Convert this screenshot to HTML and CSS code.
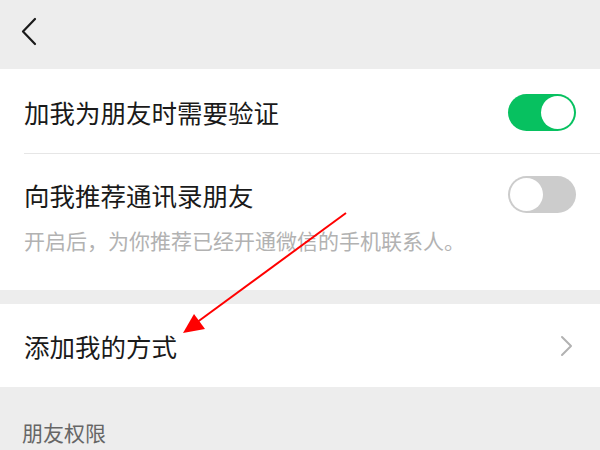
FILE: index.html
```html
<!DOCTYPE html>
<html lang="zh-CN">
<head>
<meta charset="utf-8">
<title>朋友权限设置</title>
<link rel="stylesheet" href="styles.css">
</head>
<body>
<div class="page">
  <header class="header">
    <svg class="back" width="20" height="30" viewBox="0 0 20 30">
      <polyline points="15,2 3,14.5 15,27" fill="none" stroke="#1a1a1a" stroke-width="2.2" stroke-linecap="round" stroke-linejoin="round"/>
    </svg>
  </header>

  <section class="group">
    <div class="row row-first">
      <span class="title">加我为朋友时需要验证</span>
      <span class="switch on"><span class="knob"></span></span>
    </div>
    <div class="row-wrap">
      <div class="row-second">
        <div class="line">
          <span class="title">向我推荐通讯录朋友</span>
          <span class="switch off"><span class="knob"></span></span>
        </div>
        <p class="desc">开启后，为你推荐已经开通微信的手机联系人。</p>
      </div>
    </div>
  </section>

  <section class="group group-link">
    <div class="row row-link">
      <span class="title">添加我的方式</span>
      <svg class="chev" width="14" height="22" viewBox="0 0 14 22">
        <polyline points="2,2 11,11 2,20" fill="none" stroke="#b2b2b2" stroke-width="2" stroke-linecap="round" stroke-linejoin="round"/>
      </svg>
    </div>
  </section>

  <div class="section-label">朋友权限</div>

  <svg class="arrow" width="600" height="450" viewBox="0 0 600 450">
    <line x1="346" y1="213" x2="196" y2="323" stroke="#ff0000" stroke-width="2"/>
    <polygon points="183,333 194,314 205,329" fill="#ff0000"/>
  </svg>
</div>
</body>
</html>
```

FILE: styles.css
```css
* { box-sizing: border-box; }
html, body { margin: 0; padding: 0; }
body {
  background: #ededed;
  font-family: "Noto Sans CJK SC", "Noto Sans", sans-serif;
  color: #1a1a1a;
  width: 600px;
  height: 450px;
  overflow: hidden;
}
.page {
  position: relative;
  width: 600px;
  height: 450px;
}
.header {
  height: 69px;
  background: #ededed;
  display: flex;
  align-items: center;
  padding-left: 20px;
}
.back { display: block; margin-top: -5px; }

.group { background: #ffffff; }
.group-link { margin-top: 14px; }

.title {
  font-size: 25.5px;
  line-height: 36px;
  color: #1a1a1a;
}
.row {
  display: flex;
  align-items: center;
  justify-content: space-between;
  padding: 0 24px 0 24px;
}
.row-first { height: 84px; padding-top: 2px; }

.row-wrap { padding-left: 24px; }
.row-second {
  border-top: 1px solid #e6e6e6;
  padding: 22px 24px 35px 0;
}
.line {
  display: flex;
  align-items: center;
  justify-content: space-between;
}
.desc {
  margin: 12px 0 0 0;
  font-size: 21px;
  line-height: 30px;
  color: #b2b2b2;
}

.switch {
  position: relative;
  display: block;
  width: 68px;
  height: 37px;
  border-radius: 19px;
  flex: none;
}
.switch .knob {
  position: absolute;
  top: 2px;
  width: 33px;
  height: 33px;
  border-radius: 50%;
  background: #ffffff;
}
.switch.on { background: #07c160; }
.switch.on .knob { right: 2px; }
.switch.off { background: #cccccc; }
.switch.off .knob { left: 2px; }

.row-link { height: 83px; padding-right: 26px; }
.chev { display: block; }

.section-label {
  padding: 29px 0 0 22px;
  font-size: 21px;
  line-height: 32px;
  color: #666666;
}

.arrow {
  position: absolute;
  left: 0;
  top: 0;
  pointer-events: none;
}
```
